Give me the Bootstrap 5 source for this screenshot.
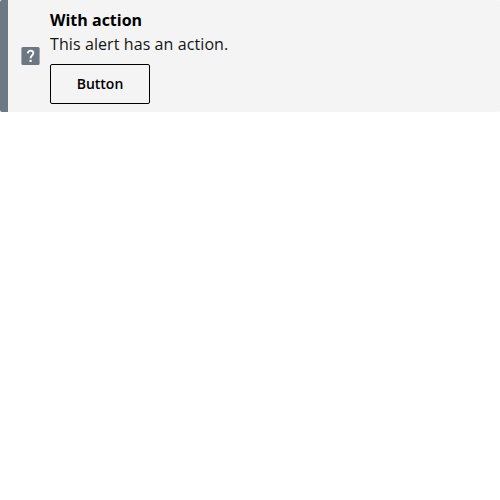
<!DOCTYPE html>
<html lang="en">
<head>
<meta charset="utf-8">
<title>Alert with action</title>
<link href="https://cdn.jsdelivr.net/npm/bootstrap@5.3.0/dist/css/bootstrap.min.css" rel="stylesheet">
<style>
body { font-family: "Open Sans", sans-serif; background: #fff; color: #000; }
.notice { background: #f4f4f4; border: 0; border-left: 8px solid #6e7784; border-radius: 2px; color: #000; padding: 8px 8px 8px 10px; }
.notice-icon { width: 24px; height: 24px; margin-right: 8px; }
.notice-line { line-height: 24px; font-size: 16px; }
.notice-text { letter-spacing: .09px; color: #141414; }
.btn-action { width: 100px; height: 40px; padding: 0 0 2px; border: 1px solid #000; border-radius: 2px; background: transparent; color: #000; font-size: 14px; font-weight: 600; margin-top: 8px; }
</style>
</head>
<body>
<div class="alert notice d-flex align-items-center mb-0" role="alert">
  <svg class="notice-icon flex-shrink-0" viewBox="0 0 24 24" aria-hidden="true">
    <rect x="3.400" y="3" width="18.200" height="18" rx="1.500" fill="#6e7784"/>
    <path d="M9.800 9.300c.2-1.900 1.300-2.700 2.800-2.700 1.700 0 2.700.9 2.700 2.500 0 2.200-2.700 2.500-2.700 5.200" fill="none" stroke="#fff" stroke-width="1.900"/>
    <rect x="11.500" y="15.800" width="2.200" height="2.200" fill="#fff"/>
  </svg>
  <div>
    <div class="notice-line fw-bold">With action</div>
    <div class="notice-line notice-text">This alert has an action.</div>
    <button type="button" class="btn btn-action">Button</button>
  </div>
</div>
<script src="https://cdn.jsdelivr.net/npm/bootstrap@5.3.0/dist/js/bootstrap.bundle.min.js"></script>
</body>
</html>
